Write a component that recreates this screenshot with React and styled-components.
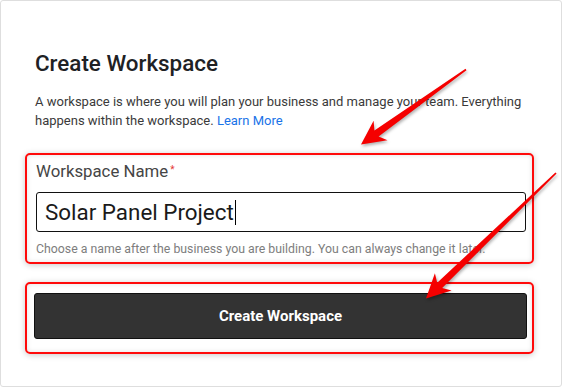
import React from "react";
import styled, { createGlobalStyle } from "styled-components";

const Global = createGlobalStyle`
  html, body { margin: 0; padding: 0; background: #ffffff; }
  body { font-family: Roboto, "Liberation Sans", Arial, sans-serif; }
  * { box-sizing: border-box; }
`;

const Page = styled.div`
  position: relative;
  width: 564px;
  height: 390px;
  overflow: hidden;
`;

const Card = styled.div`
  width: 562px;
  height: 387px;
  border: 1px solid #dedede;
  border-radius: 3px;
  background: #ffffff;
  padding: 48px 35px 0 34px;
  display: flex;
  flex-direction: column;
`;

const Title = styled.h1`
  margin: 0;
  font-size: 22.4px;
  line-height: 28px;
  font-weight: 500;
  color: #202124;
`;

const Description = styled.p`
  margin: 15px 0 0;
  font-size: 13px;
  line-height: 19px;
  color: #3a3a3a;
`;

const Link = styled.a`
  color: #1a73e8;
  text-decoration: none;
`;

const Highlight = styled.div`
  margin: ${(p) => p.$top}px -8px 0 -10px;
  padding: ${(p) => p.$pad};
  border: 2px solid #ff0a0a;
  border-radius: 5px;
  box-shadow: 0 1px 6px rgba(0, 0, 0, 0.22), inset 0 0 5px rgba(0, 0, 0, 0.12);
  display: flex;
  flex-direction: column;
`;

const Label = styled.label`
  font-size: 16.8px;
  line-height: 20px;
  color: #454545;
`;

const Required = styled.span`
  color: #e53935;
  font-size: 10px;
  vertical-align: top;
  margin-left: 2px;
  position: relative;
  top: -1px;
`;

const Field = styled.div`
  margin-top: 11px;
  height: 40px;
  border: 1px solid #111111;
  border-radius: 3px;
  padding: 0 8px;
  display: flex;
  align-items: center;
  font-size: 22.4px;
  color: #1a1a1a;
`;

const Caret = styled.span`
  display: inline-block;
  width: 1px;
  height: 25px;
  background: #000;
  margin-left: 1px;
`;

const Helper = styled.div`
  margin-top: 9px;
  font-size: 12.3px;
  line-height: 16px;
  color: #7d7d7d;
  white-space: nowrap;
`;

const Button = styled.button`
  height: 46px;
  width: 100%;
  border: 1px solid #111111;
  border-radius: 3px;
  background: #333333;
  color: #ffffff;
  font-family: inherit;
  font-size: 15px;
  font-weight: 700;
  cursor: pointer;
`;

const Overlay = styled.svg`
  position: absolute;
  left: 0;
  top: 0;
  pointer-events: none;
  filter: drop-shadow(1px 2px 1.5px rgba(0, 0, 0, 0.3));
`;

function arrowPoints(tx, ty, px, py) {
  const dx = px - tx;
  const dy = py - ty;
  const len = Math.hypot(dx, dy);
  const ux = dx / len;
  const uy = dy / len;
  const nx = -uy;
  const ny = ux;
  const L = 24;
  const W = 12;
  const J = 19;
  const s1 = 3.6;
  const s0 = 0.8;
  const pts = [
    [px, py],
    [px - L * ux + W * nx, py - L * uy + W * ny],
    [px - J * ux + s1 * nx, py - J * uy + s1 * ny],
    [tx + s0 * nx, ty + s0 * ny],
    [tx - s0 * nx, ty - s0 * ny],
    [px - J * ux - s1 * nx, py - J * uy - s1 * ny],
    [px - L * ux - W * nx, py - L * uy - W * ny],
  ];
  return pts.map((p) => p.map((v) => v.toFixed(1)).join(",")).join(" ");
}

const arrows = [
  { t: [466, 69.5], p: [361, 144.5] },
  { t: [556, 173], p: [426, 298.5] },
];

export default function App() {
  return (
    <Page>
      <Global />
      <Card>
        <Title>Create Workspace</Title>
        <Description>
          A workspace is where you will plan your business and manage your team. Everything
          happens within the workspace. <Link href="#">Learn More</Link>
        </Description>
        <Highlight $top={23} $pad="6px 6px 5px 9px">
          <Label>
            Workspace Name<Required>*</Required>
          </Label>
          <Field>
            Solar Panel Project
            <Caret />
          </Field>
          <Helper>
            Choose a name after the business you are building. You can always change it later.
          </Helper>
        </Highlight>
        <Highlight $top={18} $pad="9px 5px 13px 7px">
          <Button>Create Workspace</Button>
        </Highlight>
      </Card>
      <Overlay width="564" height="390" viewBox="0 0 564 390">
        {arrows.map((a, i) => (
          <polygon key={i} points={arrowPoints(a.t[0], a.t[1], a.p[0], a.p[1])} fill="#f50000" />
        ))}
      </Overlay>
    </Page>
  );
}
